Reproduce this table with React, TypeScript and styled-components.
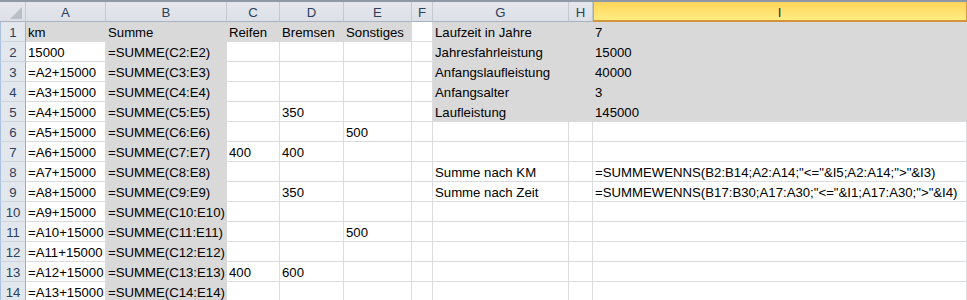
import React from "react";
import styled, { createGlobalStyle } from "styled-components";

const GlobalStyle = createGlobalStyle`
  html, body {
    margin: 0;
    padding: 0;
    background: #ffffff;
    overflow: hidden;
  }
`;

const COLUMNS = ["A", "B", "C", "D", "E", "F", "G", "H", "I"];
const SELECTED_COLUMN = "I";

type Row = Partial<Record<string, string>>;

const rows: Row[] = [
  { A: "km", B: "Summe", C: "Reifen", D: "Bremsen", E: "Sonstiges", G: "Laufzeit in Jahre", I: "7" },
  { A: "15000", B: "=SUMME(C2:E2)", G: "Jahresfahrleistung", I: "15000" },
  { A: "=A2+15000", B: "=SUMME(C3:E3)", G: "Anfangslaufleistung", I: "40000" },
  { A: "=A3+15000", B: "=SUMME(C4:E4)", G: "Anfangsalter", I: "3" },
  { A: "=A4+15000", B: "=SUMME(C5:E5)", D: "350", G: "Laufleistung", I: "145000" },
  { A: "=A5+15000", B: "=SUMME(C6:E6)", E: "500" },
  { A: "=A6+15000", B: "=SUMME(C7:E7)", C: "400", D: "400" },
  {
    A: "=A7+15000",
    B: "=SUMME(C8:E8)",
    G: "Summe nach KM",
    I: '=SUMMEWENNS(B2:B14;A2:A14;"<="&I5;A2:A14;">"&I3)',
  },
  {
    A: "=A8+15000",
    B: "=SUMME(C9:E9)",
    D: "350",
    G: "Summe nach Zeit",
    I: '=SUMMEWENNS(B17:B30;A17:A30;"<="&I1;A17:A30;">"&I4)',
  },
  { A: "=A9+15000", B: "=SUMME(C10:E10)" },
  { A: "=A10+15000", B: "=SUMME(C11:E11)", E: "500" },
  { A: "=A11+15000", B: "=SUMME(C12:E12)" },
  { A: "=A12+15000", B: "=SUMME(C13:E13)", C: "400", D: "600" },
  { A: "=A13+15000", B: "=SUMME(C14:E14)" },
];

// grey fill: column B, the header row A1:E1 and the parameter block G1:I5
const isFilled = (row: number, col: string) =>
  col === "B" ||
  (row === 1 && "ABCDE".includes(col)) ||
  (row <= 5 && "GHI".includes(col));

const Sheet = styled.div`
  display: grid;
  grid-template-columns: 26px 80px 121px 53px 64px 68px 21px 136px 24px 1fr;
  grid-auto-rows: 20px;
  width: 967px;
  border-top: 2px solid #8f98a8;
  font-family: "Liberation Sans", Arial, sans-serif;
  font-size: 13.2px;
  color: #000000;
`;

const Corner = styled.div`
  display: flex;
  justify-content: flex-end;
  align-items: flex-end;
  padding: 0 3px 2px 0;
  box-sizing: border-box;
  background: linear-gradient(#e4e8ed, #dde1e7);
  border-right: 1px solid #c3c9d1;
  border-bottom: 1px solid #a9b3bf;
`;

const ColHeader = styled.div<{ $selected?: boolean }>`
  box-sizing: border-box;
  text-align: center;
  line-height: 19px;
  padding-top: 1px;
  color: ${(p) => (p.$selected ? "#1d2f45" : "#2a405c")};
  background: ${(p) =>
    p.$selected
      ? "linear-gradient(#ffd55a, #ffec84)"
      : "linear-gradient(#e4e8ed, #dde1e7)"};
  border-right: 1px solid ${(p) => (p.$selected ? "#d9a046" : "#c3c9d1")};
  border-bottom: ${(p) => (p.$selected ? "2px solid #d4953a" : "1px solid #a9b3bf")};
  box-shadow: ${(p) => (p.$selected ? "inset 1px 0 0 #d9a046" : "none")};
`;

const RowHeader = styled.div`
  box-sizing: border-box;
  text-align: center;
  line-height: 19px;
  padding-top: 1px;
  color: #2a405c;
  background: #e2e7ee;
  border-left: 1px solid #a9c0dc;
  border-right: 1px solid #a6b0bc;
  border-bottom: 1px solid #cdd4dd;
`;

const Cell = styled.div<{ $filled: boolean }>`
  box-sizing: border-box;
  padding: 1px 0 0 2px;
  line-height: 19px;
  white-space: nowrap;
  background: ${(p) => (p.$filled ? "#d9d9d9" : "#ffffff")};
  border-right: 1px solid ${(p) => (p.$filled ? "#d9d9d9" : "#dadcdd")};
  border-bottom: 1px solid ${(p) => (p.$filled ? "#d9d9d9" : "#dadcdd")};
`;

function CornerMark() {
  return (
    <svg width="12" height="12" viewBox="0 0 12 12">
      <polygon points="0,12 12,12 12,0" fill="#b9bfc7" />
    </svg>
  );
}

export default function App() {
  return (
    <>
      <GlobalStyle />
      <Sheet>
        <Corner>
          <CornerMark />
        </Corner>
        {COLUMNS.map((c) => (
          <ColHeader key={c} $selected={c === SELECTED_COLUMN}>
            {c}
          </ColHeader>
        ))}
        {rows.map((row, i) => (
          <React.Fragment key={i}>
            <RowHeader>{i + 1}</RowHeader>
            {COLUMNS.map((c) => (
              <Cell key={c} $filled={isFilled(i + 1, c)}>
                {row[c] ?? ""}
              </Cell>
            ))}
          </React.Fragment>
        ))}
      </Sheet>
    </>
  );
}
